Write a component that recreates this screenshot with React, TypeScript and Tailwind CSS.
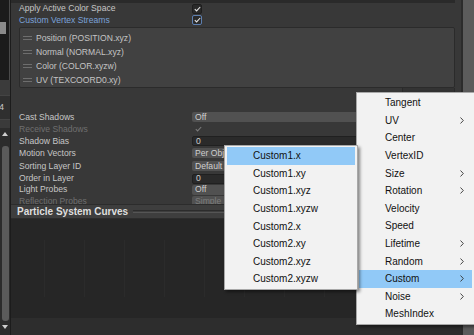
import type { ReactNode } from "react";

const menuItems: { label: string; sub?: boolean; active?: boolean }[] = [
  { label: "Tangent" },
  { label: "UV", sub: true },
  { label: "Center" },
  { label: "VertexID" },
  { label: "Size", sub: true },
  { label: "Rotation", sub: true },
  { label: "Velocity" },
  { label: "Speed" },
  { label: "Lifetime", sub: true },
  { label: "Random", sub: true },
  { label: "Custom", sub: true, active: true },
  { label: "Noise", sub: true },
  { label: "MeshIndex" },
];

const customItems = [
  "Custom1.x",
  "Custom1.xy",
  "Custom1.xyz",
  "Custom1.xyzw",
  "Custom2.x",
  "Custom2.xy",
  "Custom2.xyz",
  "Custom2.xyzw",
];

const streams = [
  "Position (POSITION.xyz)",
  "Normal (NORMAL.xyz)",
  "Color (COLOR.xyzw)",
  "UV (TEXCOORD0.xy)",
];

function Check({ focus, dim }: { focus?: boolean; dim?: boolean }) {
  return (
    <div
      className={`w-[10px] h-[10px] rounded-[2px] flex items-center justify-center ${
        dim ? "" : focus ? "bg-[#2a2a2a] border border-[#5d7fb0]" : "bg-[#2a2a2a] border border-[#1e1e1e]"
      }`}
    >
      <svg width="7" height="6" viewBox="0 0 7 6" fill="none">
        <path
          d="M0.8 3.2 L2.6 4.9 L6.2 1"
          stroke={dim ? "#7a7a7a" : "#e6e6e6"}
          strokeWidth="1.1"
        />
      </svg>
    </div>
  );
}

function Field({ kind, children, dim }: { kind: "drop" | "input"; children?: ReactNode; dim?: boolean }) {
  return (
    <div
      className={`flex-1 h-[10px] rounded-[2px] pl-[3px] flex items-center leading-none ${
        kind === "drop" ? "bg-[#515151]" : "bg-[#2a2a2a] border border-[#202020]"
      } ${dim ? "text-[#7d7d7d]" : "text-[#cfcfcf]"}`}
    >
      {children}
    </div>
  );
}

function PropRow({ label, h, dim, children }: { label: string; h: string; dim?: boolean; children: ReactNode }) {
  return (
    <div className={`flex items-center ${h}`}>
      <div className={`w-[173px] shrink-0 ${dim ? "text-[#6f6f6f]" : "text-[#c6c6c6]"}`}>{label}</div>
      <div className="flex-1 flex items-center">{children}</div>
    </div>
  );
}

function Chevron() {
  return (
    <svg width="4" height="7" viewBox="0 0 4 7" fill="none">
      <path d="M0.5 0.5 L3.3 3.5 L0.5 6.5" stroke="#333" strokeWidth="0.9" />
    </svg>
  );
}

export default function App() {
  return (
    <div className="relative w-[474px] h-[335px] overflow-hidden flex bg-[#383838] font-['Liberation_Sans',Arial,sans-serif] text-[8.6px]">
      {/* left strip */}
      <div className="w-[11px] shrink-0 flex flex-col bg-[#2e2e2e] border-r border-[#1c1c1c]">
        <div className="h-[80px] bg-[#1b1b1b] border-r border-[#4a4a4a] pt-[22px]">
          <div className="w-[6px] h-[12px] bg-[#8a8a8a]" />
        </div>
        <div className="h-[15px] bg-[#3b3b3b]" />
        <div className="h-[25px] bg-[#2f2f2f] border-y border-[#444] flex items-center justify-end overflow-hidden text-[#c9c9c9] text-[9px] pr-[6px]">
          4
        </div>
        <div className="h-[8px] bg-[#3a3a3a]" />
        <div className="flex-1 flex flex-col items-center bg-[#2c2c2c] pt-[4px]">
          <svg width="6" height="4" viewBox="0 0 6 4">
            <path d="M0 4 L3 0 L6 4 Z" fill="#cfcfcf" />
          </svg>
          <div className="w-[7px] flex-1 mt-[10px] rounded-[3px] bg-[#5b5b5b]" />
          <svg className="mt-[4px] mb-[6px]" width="6" height="4" viewBox="0 0 6 4">
            <path d="M0 0 L3 4 L6 0 Z" fill="#cfcfcf" />
          </svg>
        </div>
      </div>

      {/* main inspector */}
      <div className="w-[450px] shrink-0 flex flex-col">
        <div className="h-[3px] bg-[#2a2a2a] mr-[6px]" />
        <div className="pl-[8px]">
          <PropRow label="Apply Active Color Space" h="h-[11px]">
            <Check />
          </PropRow>
          <div className="flex items-center h-[12px]">
            <div className="w-[173px] shrink-0 text-[#7ba2d8]">Custom Vertex Streams</div>
            <Check focus />
          </div>
        </div>

        <div className="ml-[8px] mr-[6px] mt-[1px] h-[61px] bg-[#414141] border border-[#2b2b2b] rounded-[2px] pt-[3px] flex flex-col">
          {streams.map((s) => (
            <div key={s} className="h-[14.3px] flex items-center text-[#c4c4c4]">
              <div className="w-[9px] ml-[3px] mr-[4px] flex flex-col gap-[2px]">
                <div className="h-px bg-[#6e6e6e]" />
                <div className="h-px bg-[#6e6e6e]" />
              </div>
              {s}
            </div>
          ))}
        </div>
        <div className="flex justify-end mr-[6px] h-[7px]">
          <div className="w-[53px] h-[7px] bg-[#333] border-x border-b border-[#2a2a2a] rounded-b-[2px]" />
        </div>

        <div className="mt-[16px] h-[93px] overflow-hidden pl-[8px] pr-[6px]">
          <PropRow label="Cast Shadows" h="h-[12px]">
            <Field kind="drop">Off</Field>
          </PropRow>
          <PropRow label="Receive Shadows" h="h-[12px]" dim>
            <div className="ml-[1px]">
              <Check dim />
            </div>
          </PropRow>
          <PropRow label="Shadow Bias" h="h-[12px]">
            <Field kind="input">0</Field>
          </PropRow>
          <PropRow label="Motion Vectors" h="h-[12px]">
            <Field kind="drop">Per Object Motion</Field>
          </PropRow>
          <PropRow label="Sorting Layer ID" h="h-[14px]">
            <Field kind="drop">Default</Field>
          </PropRow>
          <PropRow label="Order in Layer" h="h-[11px]">
            <Field kind="input">0</Field>
          </PropRow>
          <PropRow label="Light Probes" h="h-[11px]">
            <Field kind="drop">Off</Field>
          </PropRow>
          <PropRow label="Reflection Probes" h="h-[12px]" dim>
            <Field kind="drop" dim>
              Simple
            </Field>
          </PropRow>
        </div>

        <div className="h-[15px] bg-[#3e3e3e] border-y border-[#2c2c2c] flex items-center pl-[6px]">
          <span className="font-bold text-[10px] text-[#dedede]">Particle System Curves</span>
          <div className="flex-1 ml-[5px] flex flex-col gap-px">
            <div className="h-px bg-[#2c2c2c]" />
            <div className="h-px bg-[#555]" />
          </div>
        </div>

        <div className="h-[99px] bg-[#262626] pt-[21px] pl-[33px]">
          <div className="flex h-[57px]">
            {Array.from({ length: 9 }).map((_, i) => (
              <div key={i} className="w-[40px] border-l border-[#2b2b2b]" />
            ))}
          </div>
        </div>
        <div className="flex-1 bg-[#2d2d2d]" />
      </div>

      {/* right scrollbar */}
      <div className="flex-1 flex">
        <div className="w-[2px] bg-[#2b2b2b]" />
        <div className="flex-1 bg-[#5b5b5b]" />
      </div>

      {/* Custom submenu */}
      <div className="absolute z-20 left-[224px] top-[145px] w-[134px] bg-[#f2f2f2] border border-[#a8a8a8] py-[1px] shadow-[2px_2px_3px_rgba(0,0,0,0.45)] font-['Liberation_Sans',Arial,sans-serif] text-[10px] text-[#111]">
        {customItems.map((c, i) => (
          <div
            key={c}
            className={`h-[17.6px] mx-[2px] pl-[26px] flex items-center ${i === 0 ? "bg-[#91c9f7]" : ""}`}
          >
            {c}
          </div>
        ))}
      </div>

      {/* Vertex stream menu */}
      <div className="absolute z-10 left-[356px] top-[92px] w-[119px] bg-[#f2f2f2] border border-[#a8a8a8] py-[1px] shadow-[2px_2px_3px_rgba(0,0,0,0.45)] text-[10px] text-[#111]">
        {menuItems.map((m) => (
          <div
            key={m.label}
            className={`h-[17.6px] mx-[2px] pl-[26px] pr-[8px] flex items-center justify-between ${
              m.active ? "bg-[#91c9f7]" : ""
            }`}
          >
            <span>{m.label}</span>
            {m.sub && <Chevron />}
          </div>
        ))}
      </div>
    </div>
  );
}
